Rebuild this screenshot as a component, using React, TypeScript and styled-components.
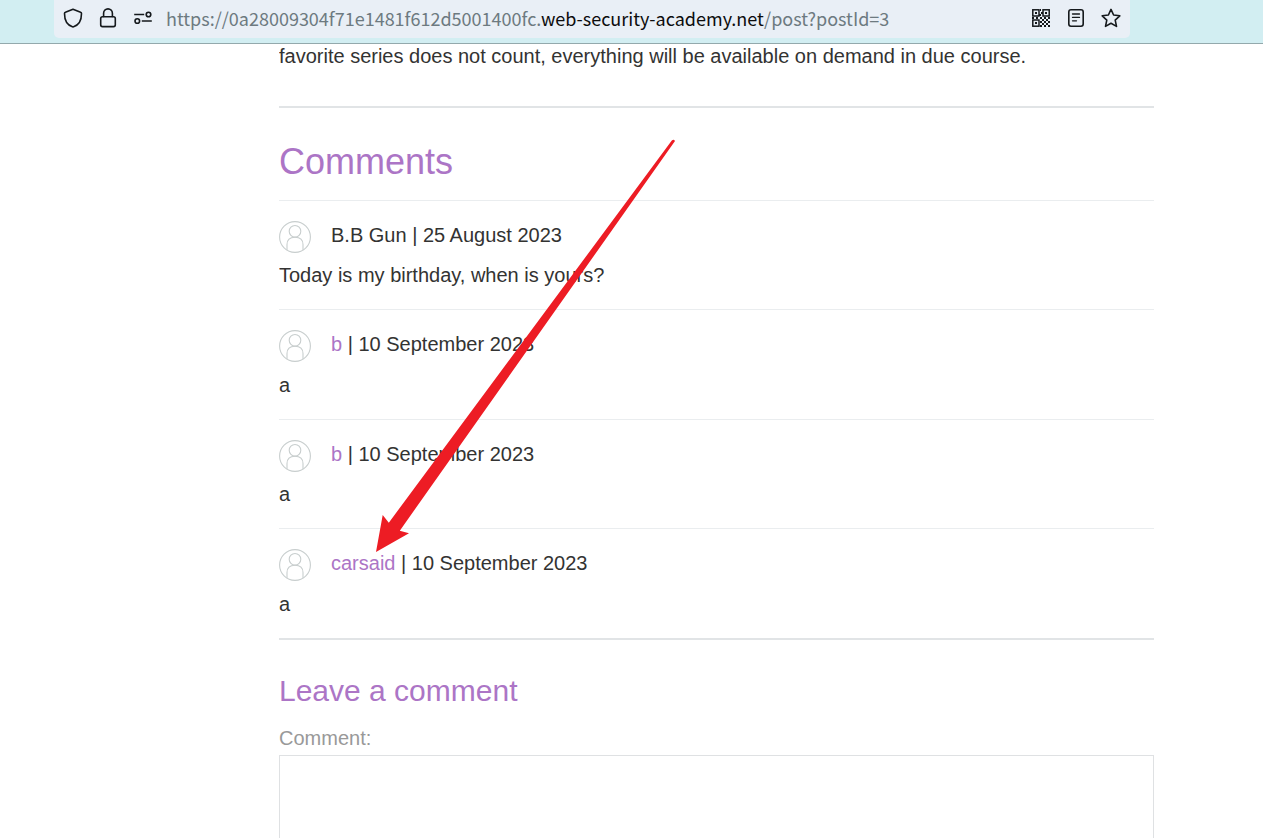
import React from 'react';
import styled, { createGlobalStyle } from 'styled-components';

const GlobalStyle = createGlobalStyle`
  *, *::before, *::after { box-sizing: border-box; }
  body {
    margin: 0;
    background: #fff;
    color: #333332;
    font-family: "Liberation Sans", Arial, sans-serif;
    font-size: 20px;
    line-height: 24px;
  }
`;

const Window = styled.div`
  position: relative;
  display: flex;
  flex-direction: column;
  height: 100vh;
  overflow: hidden;
`;

const BrowserBar = styled.header`
  flex: none;
  padding: 0 133px 5px 54px;
  background: #d2eef2;
  border-bottom: 1px solid #93a9ac;
`;

const AddressField = styled.div`
  display: flex;
  align-items: center;
  gap: 15px;
  height: 38px;
  padding: 0 9px 2px;
  background: #e9eff6;
  border-radius: 0 0 5px 5px;
`;

const IconButton = styled.button`
  display: flex;
  flex: none;
  padding: 0;
  border: 0;
  background: none;
  color: #15191c;
`;

const Address = styled.div`
  flex: 1;
  min-width: 0;
  overflow: hidden;
  white-space: nowrap;
  color: #6d7a80;
  font-family: "Noto Sans CJK SC", "Noto Sans", sans-serif;
  font-size: 18px;
  margin-left: -2px;

  b {
    color: #0c0c0d;
    font-weight: 400;
  }
`;

const Page = styled.main`
  flex: 1;
  min-height: 0;
  margin: 0 109px 0 279px;
  overflow: hidden;
`;

const Paragraph = styled.p`
  margin: 0;
`;

const Divider = styled.hr`
  height: 2px;
  margin: 0;
  border: 0;
  background: #e1e4e6;
`;

const Article = styled.article`
  padding-bottom: 38px;
`;

const Title = styled.h1`
  margin: 0;
  padding: 34px 0 18px;
  color: #ac75c6;
  font-size: 36px;
  font-weight: 400;
  line-height: 40px;
`;

const Byline = styled.div`
  display: flex;
  gap: 20px;
  height: 42px;
  padding-top: 2px;
`;

const Comment = styled.section`
  padding: 20px 0 22px;
  border-top: 1px solid #eaedef;

  &:nth-of-type(even) ${Byline} {
    height: 43px;
  }
`;

const Avatar = styled.svg`
  flex: none;
  margin-top: -2px;
`;

const AuthorLink = styled.a`
  color: #ac75c6;
  text-decoration: none;
`;

const FormTitle = styled.h2`
  margin: 0;
  padding: 32px 0 16px;
  color: #ac75c6;
  font-size: 30px;
  font-weight: 400;
  line-height: 38px;
`;

const Label = styled.label`
  display: block;
  padding-bottom: 5px;
  color: #999;
`;

const TextArea = styled.textarea`
  display: block;
  width: 100%;
  height: 240px;
  padding: 8px;
  border: 1px solid #dfe1e3;
  background: #fff;
  font: inherit;
  resize: none;
  outline: 0;
`;

const Arrow = styled.svg`
  position: absolute;
  left: 376px;
  top: 139px;
  pointer-events: none;
`;

const comments = [
  { author: 'B.B Gun', linked: false, date: '25 August 2023', text: 'Today is my birthday, when is yours?' },
  { author: 'b', linked: true, date: '10 September 2023', text: 'a' },
  { author: 'b', linked: true, date: '10 September 2023', text: 'a' },
  { author: 'carsaid', linked: true, date: '10 September 2023', text: 'a' },
];

const stroke = {
  width: 20,
  height: 20,
  viewBox: '0 0 20 20',
  fill: 'none',
  stroke: 'currentColor',
  strokeWidth: 1.6,
  strokeLinecap: 'round' as const,
  strokeLinejoin: 'round' as const,
};

const ShieldIcon = () => (
  <svg {...stroke}>
    <path d="M10 1.3 L17.6 4.3 C18.2 4.5 18.5 5 18.5 5.6 C18.5 11.5 16.8 16.8 10.6 18.8 Q10 19 9.4 18.8 C3.2 16.8 1.5 11.5 1.5 5.6 C1.5 5 1.8 4.5 2.4 4.3 Z" />
  </svg>
);

const LockIcon = () => (
  <svg {...stroke}>
    <rect x="2.7" y="8.7" width="14.6" height="9.9" rx="1.8" />
    <path d="M5.6 8.5 V5.3 a4.4 4.4 0 0 1 8.8 0 V8.5" />
  </svg>
);

const PermissionsIcon = () => (
  <svg {...stroke} strokeLinecap="butt">
    <path d="M1.2 6.5 H11.2 M8.8 13 H18.8" />
    <circle cx="15.5" cy="6.5" r="2.3" />
    <circle cx="4.3" cy="13" r="2.3" />
  </svg>
);

const QrIcon = () => (
  <svg width="20" height="20" viewBox="0 0 20 20" fill="currentColor">
    <g fill="none" stroke="currentColor" strokeWidth="1.5">
      <rect x="1.8" y="1.8" width="6.2" height="6.2" />
      <rect x="12" y="1.8" width="6.2" height="6.2" />
      <rect x="1.8" y="12" width="6.2" height="6.2" />
    </g>
    <path d="M4 4h2v2h-2z M14 4h2v2h-2z M4 14h2v2h-2z M9 1h1v2h-1z M10 4h2v2h-2z M8 6h2v2h-2z M1 9h2v2h-2z M5 9h2v2h-2z M9 9h2v2h-2z M13 9h2v2h-2z M17 9h2v2h-2z M11 11h2v2h-2z M15 11h2v2h-2z M9 13h2v2h-2z M13 13h2v2h-2z M17 13h2v2h-2z M11 15h2v2h-2z M15 15h2v2h-2z M9 17h2v2h-2z M13 17h2v2h-2z M17 17h2v2h-2z" />
  </svg>
);

const ReaderIcon = () => (
  <svg {...stroke}>
    <rect x="2.8" y="1.8" width="14.4" height="16.4" rx="2.2" />
    <path d="M6.5 6 H13.5 M6.5 9.4 H13.5 M6.5 12.8 H10.5" strokeWidth="1.3" />
  </svg>
);

const StarIcon = () => (
  <svg {...stroke}>
    <path d="M10 1.4 L12.6 7 L18.8 7.8 L14.2 12.1 L15.5 18.4 L10 15.3 L4.5 18.4 L5.8 12.1 L1.2 7.8 L7.4 7 Z" />
  </svg>
);

export default function App() {
  return (
    <>
      <GlobalStyle />
      <Window>
        <BrowserBar>
          <AddressField>
            <IconButton aria-label="Tracking protection"><ShieldIcon /></IconButton>
            <IconButton aria-label="Connection security"><LockIcon /></IconButton>
            <IconButton aria-label="Permissions"><PermissionsIcon /></IconButton>
            <Address>
              https://0a28009304f71e1481f612d5001400fc.<b>web-security-academy.net</b>/post?postId=3
            </Address>
            <IconButton aria-label="QR code"><QrIcon /></IconButton>
            <IconButton aria-label="Reader view"><ReaderIcon /></IconButton>
            <IconButton aria-label="Bookmark"><StarIcon /></IconButton>
          </AddressField>
        </BrowserBar>
        <Page>
          <Article>
            <Paragraph>favorite series does not count, everything will be available on demand in due course.</Paragraph>
          </Article>
          <Divider />
          <Title>Comments</Title>
          {comments.map((comment, index) => (
            <Comment key={index}>
              <Byline>
                <Avatar width="32" height="32" viewBox="0 0 32 32" fill="none" stroke="#c8cece" strokeWidth="1.1">
                  <circle cx="16" cy="16" r="15.4" />
                  <circle cx="16" cy="10.3" r="5.8" />
                  <path d="M8 29.2 V23.5 C8 18.5 11 16.2 16 16.2 S24 18.5 24 23.5 V29.2" />
                </Avatar>
                <span>
                  {comment.linked ? <AuthorLink href="#">{comment.author}</AuthorLink> : comment.author} | {comment.date}
                </span>
              </Byline>
              <Paragraph>{comment.text}</Paragraph>
            </Comment>
          ))}
          <Divider />
          <FormTitle>Leave a comment</FormTitle>
          <Label htmlFor="comment">Comment:</Label>
          <TextArea id="comment" />
        </Page>
        <Arrow width="300" height="414" viewBox="0 0 300 414" fill="#ed1c24">
          <path d="M295.8 1.6 Q297.6 -0.2 299 2 L23.8 391.7 L33 394.3 L0 413 L6.7 376 L12.8 383.7 Z" />
        </Arrow>
      </Window>
    </>
  );
}
